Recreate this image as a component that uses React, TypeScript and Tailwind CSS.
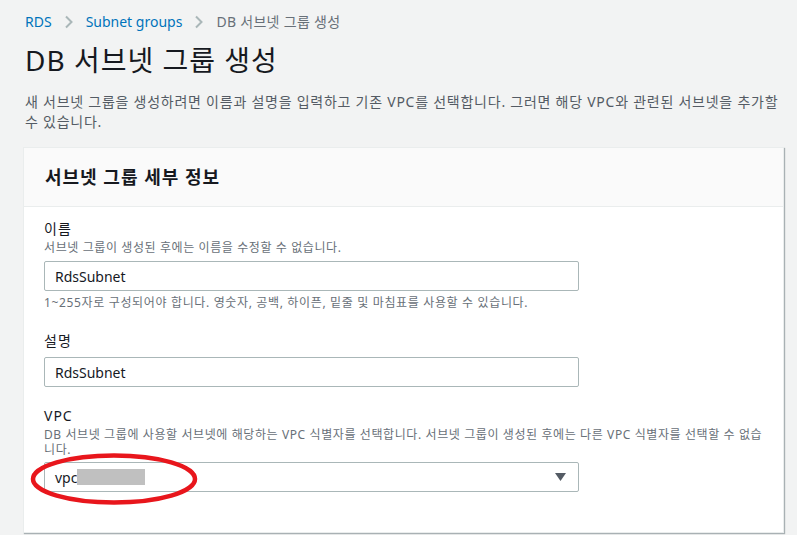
const font = {
  fontFamily: '"Noto Sans", "Noto Sans CJK KR", sans-serif',
};

const Chevron = () => (
  <svg width="10" height="14" viewBox="0 0 10 14" className="mx-3">
    <path d="M2 1.5 L7.5 7 L2 12.5" fill="none" stroke="#aab7b8" strokeWidth="2" />
  </svg>
);

interface FieldProps {
  label: string;
  hint?: string;
  children: React.ReactNode;
}

const Field = ({ label, hint, children }: FieldProps) => (
  <div className="flex flex-col">
    <div className="text-[14px] leading-[20px] tracking-[1px] text-[#16191f]">{label}</div>
    {hint && (
      <div className="text-[12px] leading-[15px] tracking-[0.6px] text-[#687078] mt-[1px]">{hint}</div>
    )}
    {children}
  </div>
);

const TextInput = ({ value }: { value: string }) => (
  <div className="mt-[6px] w-[535px] h-[30px] border border-[#aab7b8] rounded-[2px] bg-white flex items-center px-[10px] text-[14px] text-[#16191f]">
    {value}
  </div>
);

export default function App() {
  return (
    <div className="w-[797px] h-[535px] bg-[#f2f3f3] overflow-hidden pl-[25px] pr-[13px]" style={font}>
      {/* breadcrumb */}
      <div className="flex items-center pt-3 h-[32px] text-[14px] leading-[20px]">
        <span className="text-[#0073bb]">RDS</span>
        <Chevron />
        <span className="text-[#0073bb]">Subnet groups</span>
        <Chevron />
        <span className="text-[#687078] tracking-[0.3px]">DB 서브넷 그룹 생성</span>
      </div>

      <h1 className="mt-[10px] text-[28px] leading-[36px] tracking-[1px] text-[#16191f]">DB 서브넷 그룹 생성</h1>

      <p className="mt-[14px] text-[14px] leading-[20px] tracking-[0.75px] break-keep text-[#545b64]">
        새 서브넷 그룹을 생성하려면 이름과 설명을 입력하고 기존 VPC를 선택합니다. 그러면 해당 VPC와 관련된 서브넷을 추가할 수 있습니다.
      </p>

      <div className="mt-[15px] -ml-[2px] w-[761px] bg-white border border-[#eaeded] shadow-[1px_1px_1px_0_rgba(0,28,36,0.3)]">
        <div className="h-[59px] bg-[#fafafa] border-b border-[#eaeded] flex items-center px-[21px]">
          <h2 className="text-[18px] font-bold tracking-[1px] text-[#16191f]">서브넷 그룹 세부 정보</h2>
        </div>

        <div className="px-[20px] pt-[12px] pb-[40px] flex flex-col">
          <Field label="이름" hint="서브넷 그룹이 생성된 후에는 이름을 수정할 수 없습니다.">
            <TextInput value="RdsSubnet" />
            <div className="mt-[4px] text-[12px] leading-[16px] tracking-[0.65px] text-[#687078]">
              1~255자로 구성되어야 합니다. 영숫자, 공백, 하이픈, 밑줄 및 마침표를 사용할 수 있습니다.
            </div>
          </Field>

          <div className="mt-[20px]">
            <Field label="설명">
              <TextInput value="RdsSubnet" />
            </Field>
          </div>

          <div className="mt-[19px]">
            <Field
              label="VPC"
              hint="DB 서브넷 그룹에 사용할 서브넷에 해당하는 VPC 식별자를 선택합니다. 서브넷 그룹이 생성된 후에는 다른 VPC 식별자를 선택할 수 없습니다."
            >
              <div className="relative mt-[5px] w-[535px] h-[30px] border border-[#aab7b8] rounded-[2px] bg-white flex items-center pl-[10px] pr-[12px] text-[14px] text-[#16191f]">
                <span>vpc</span>
                <span className="w-[68px] h-[16px] bg-[#c0c0c0]" />
                <svg width="11" height="8" viewBox="0 0 11 8" className="ml-auto">
                  <path d="M0 0 H11 L5.5 8 Z" fill="#545b64" />
                </svg>
                <svg
                  width="172"
                  height="56"
                  viewBox="0 0 172 56"
                  className="absolute left-[-16px] top-[-11px] pointer-events-none"
                >
                  <ellipse cx="85" cy="27" rx="81" ry="23.5" fill="none" stroke="#e8161c" strokeWidth="4.5" />
                </svg>
              </div>
            </Field>
          </div>
        </div>
      </div>
    </div>
  );
}
